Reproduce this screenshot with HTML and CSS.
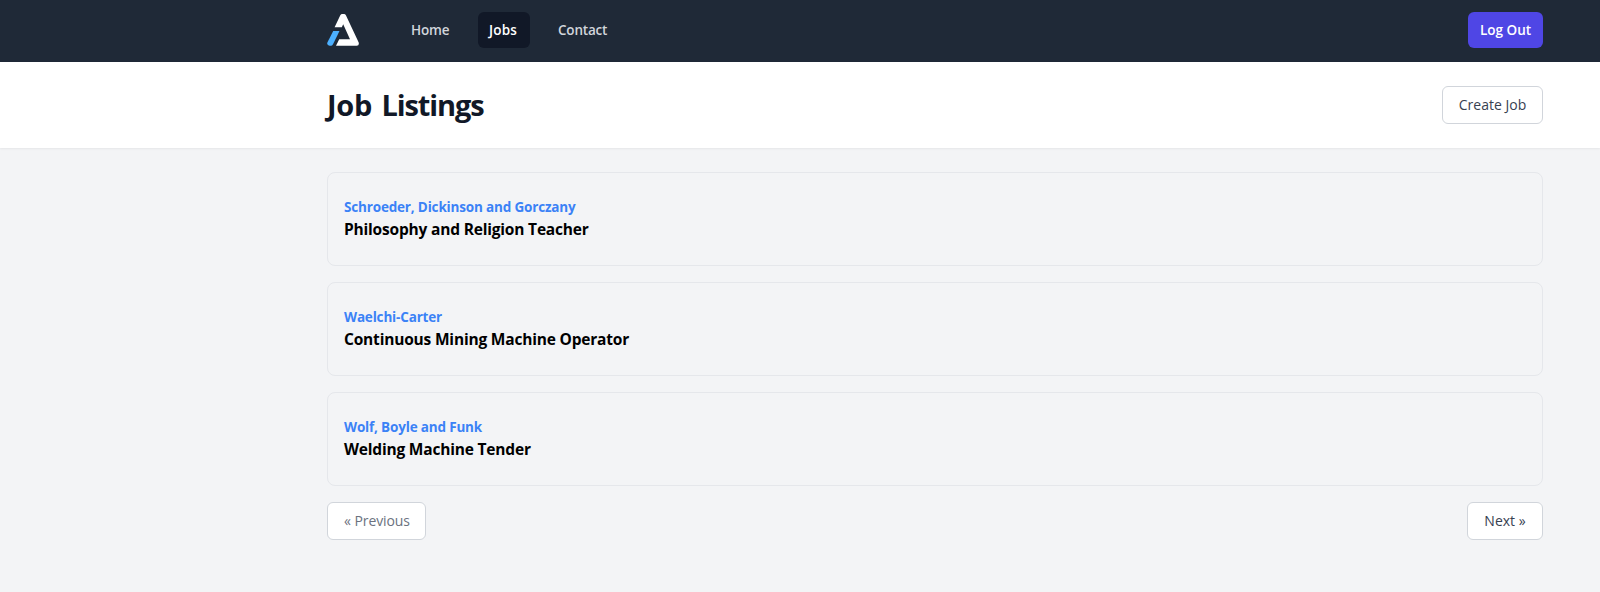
FILE: index.html
```html
<!DOCTYPE html>
<html lang="en">
<head>
<meta charset="utf-8">
<title>Job Listings</title>
<link rel="stylesheet" href="styles.css">
</head>
<body>
<nav class="nav">
  <svg class="logo" viewBox="0 0 32 32" aria-label="Logo">
    <path fill="#fff" d="M13.3 1.2Q14 0 15.2 0H17Q18.200 0 18.900 1.200L31.600 28.200Q32.600 31.500 29.700 31.700H9L12.200 25.200H23L16.200 10.300L14.800 13.300H7.600Z"/>
    <path fill="#4cb0ff" d="M6.200 17H12.500L6 30.200Q5.200 31.700 3.800 31.700H2.600Q-.4 31 .4 28.400Z"/>
  </svg>
  <div class="links">
    <a class="link home">Home</a>
    <a class="link active">Jobs</a>
    <a class="link contact">Contact</a>
  </div>
  <button class="logout"><span>Log Out</span></button>
</nav>
<header class="header">
  <h1><span class="lead">Job</span> Listings</h1>
  <a class="button create">Create Job</a>
</header>
<main class="main">
  <a class="card">
    <div class="company">Schroeder, Dickinson and Gorczany</div>
    <div class="title">Philosophy and Religion Teacher</div>
  </a>
  <a class="card">
    <div class="company">Waelchi-Carter</div>
    <div class="title">Continuous Mining Machine Operator</div>
  </a>
  <a class="card">
    <div class="company">Wolf, Boyle and Funk</div>
    <div class="title">Welding Machine Tender</div>
  </a>
  <div class="pager">
    <span class="button previous">« Previous</span>
    <a class="button next">Next »</a>
  </div>
</main>
</body>
</html>
```
FILE: styles.css
```css
* { box-sizing: border-box; }
body {
  margin: 0;
  min-height: 100vh;
  background: #f3f4f6;
  font: 14px/20px "Segoe UI", "Open Sans", "Noto Sans", sans-serif;
  color: #000;
}
.nav, .header { display: flex; align-items: center; padding: 0 57px 0 327px; }
.nav { height: 62px; padding-bottom: 2px; background: #1f2937; }
.logo { width: 32px; height: 32px; margin-top: -1px; }
.links { display: flex; gap: 16px; margin-left: 40px; }
.link {
  display: flex;
  align-items: center;
  height: 36px;
  padding: 0 12px;
  border-radius: 6px;
  font-size: 13.5px;
  font-weight: 600;
  letter-spacing: -.15px;
  color: #d1d5db;
}
.home { width: 63px; }
.active { width: 52px; padding: 0 11px; background: #111827; color: #fff; letter-spacing: .2px; }
.contact { width: 75px; letter-spacing: -.2px; }
.logout {
  display: flex;
  align-items: center;
  justify-content: center;
  width: 75px;
  height: 36px;
  margin-left: auto;
  padding: 0;
  border: 0;
  border-radius: 6px;
  background: #4f46e5;
  color: #fff;
  font: inherit;
  font-size: 13.5px;
  font-weight: 600;
}
.header {
  justify-content: space-between;
  height: 86px;
  background: #fff;
  box-shadow: 0 1px 2px rgba(0,0,0,.06);
}
h1 {
  margin: 0;
  font-size: 29px;
  line-height: 36px;
  font-weight: 700;
  letter-spacing: -1.1px;
  word-spacing: 3px;
  color: #111827;
}
.lead { letter-spacing: -.3px; }
.button {
  display: flex;
  align-items: center;
  justify-content: center;
  height: 38px;
  border: 1px solid #d1d5db;
  border-radius: 6px;
  background: #fff;
  font-weight: 500;
  color: #374151;
}
.create { width: 101px; }
.previous { width: 99px; padding-left: 1px; letter-spacing: -.1px; color: #6b7280; }
.next { width: 76px; }
.main { display: flex; flex-direction: column; gap: 16px; padding: 24px 57px 0 327px; }
.card { display: block; height: 94px; padding: 24px 16px; border: 1px solid #e5e7eb; border-radius: 8px; }
.company { font-size: 13.5px; font-weight: 700; letter-spacing: -.17px; color: #3b82f6; }
.title { font-size: 15.5px; line-height: 24px; font-weight: 700; letter-spacing: -.19px; }
.pager { display: flex; justify-content: space-between; }
```
